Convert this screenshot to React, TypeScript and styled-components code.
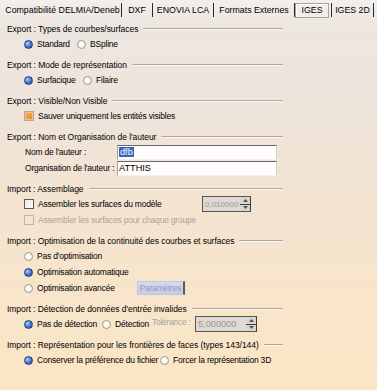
import React from "react";
import styled, { createGlobalStyle, css } from "styled-components";

const Global = createGlobalStyle`
  html, body { margin: 0; padding: 0; }
  body { font-family: "Liberation Sans", Arial, sans-serif; }
`;

const Page = styled.div`
  width: 377px;
  height: 390px;
  overflow: hidden;
  background: linear-gradient(180deg, #ece6e2 0%, #efe4da 30%, #f5e4ce 60%, #fbe5c4 100%);
  font-family: "Liberation Sans", Arial, sans-serif;
  font-size: 8.5px;
  letter-spacing: -0.2px;
  color: #000;
  display: flex;
  flex-direction: column;
`;

const TabBar = styled.div`
  height: 20px;
  display: flex;
  align-items: center;
  padding-left: 4px;
  background: linear-gradient(180deg, #f2efec, #ece7e3);
  white-space: nowrap;
  font-size: 8.8px;
  letter-spacing: 0;
`;

const Tab = styled.div<{ $w: number; $active?: boolean }>`
  width: ${(p) => p.$w}px;
  flex: none;
  height: 15px;
  display: flex;
  align-items: center;
  justify-content: center;
  box-sizing: border-box;
  overflow: hidden;
  ${(p) =>
    p.$active &&
    css`
      border: 1px solid #aaa49e;
      box-shadow: inset 1px 1px 0 #fff;
      background: #f1ede9;
    `}
`;

const Sep = styled.div`
  width: 1px;
  height: 14px;
  background: #2a2a2a;
  flex: none;
`;

const Content = styled.div`
  padding: 2px 0 0 7px;
  width: 276px;
  display: flex;
  flex-direction: column;
`;

const Section = styled.div`
  display: flex;
  flex-direction: column;
  padding-bottom: 6px;
`;

const Header = styled.div`
  height: 14px;
  display: flex;
  align-items: center;
  gap: 5px;
  white-space: nowrap;
  font-size: 8.5px;
  letter-spacing: -0.05px;
  &::after {
    content: "";
    flex: 1;
    height: 0;
    border-top: 1px solid #b0a89f;
    border-bottom: 1px solid #fbf6f0;
    margin-top: -1px;
  }
`;

const Body = styled.div`
  padding-left: 17px;
  display: flex;
  flex-direction: column;
`;

const Row = styled.div<{ $cols?: string }>`
  height: 16px;
  display: ${(p) => (p.$cols ? "grid" : "flex")};
  ${(p) => p.$cols && css`grid-template-columns: ${p.$cols};`}
  align-items: center;
  white-space: nowrap;
`;

const Option = styled.label<{ $disabled?: boolean }>`
  display: inline-flex;
  align-items: center;
  gap: 4px;
  color: ${(p) => (p.$disabled ? "#aaa39b" : "#000")};
`;

const RadioDot = styled.span<{ $on?: boolean }>`
  width: 9px;
  height: 9px;
  border-radius: 50%;
  box-sizing: border-box;
  flex: none;
  ${(p) =>
    p.$on
      ? css`
          border: 1px solid #1c3f86;
          background: radial-gradient(circle at 35% 35%, #b8d0f4 0%, #4f7fcf 45%, #1b418e 100%);
        `
      : css`
          border: 1px solid #9a9690;
          background: radial-gradient(circle at 40% 40%, #fffff8 0%, #f6f1e4 100%);
        `}
`;

const Box = styled.span<{ $variant: "orange" | "plain" | "disabled" }>`
  width: 10px;
  height: 10px;
  box-sizing: border-box;
  flex: none;
  ${(p) =>
    p.$variant === "orange"
      ? css`
          border: 1px solid #b9a78f;
          background: #fff8ee;
          box-shadow: inset 0 0 0 1px #f7c07a;
          background-image: linear-gradient(135deg, #f8b060, #e58a2a);
          background-size: 6px 6px;
          background-position: center;
          background-repeat: no-repeat;
        `
      : p.$variant === "plain"
      ? css`
          border: 1px solid #5c5955;
          background: linear-gradient(135deg, #efeae2, #fdfbf7);
        `
      : css`
          border: 1px solid #bdb6ad;
          background: transparent;
        `}
`;

const FieldGrid = styled.div`
  display: grid;
  grid-template-columns: 92px 160px;
  grid-auto-rows: 16px;
  align-items: center;
  margin-left: 1px;
  white-space: nowrap;
`;

const TextInput = styled.div`
  height: 15px;
  box-sizing: border-box;
  border-top: 1px solid #6b6864;
  border-left: 1px solid #a8a29b;
  border-right: 1px solid #d6d0c8;
  border-bottom: 1px solid #f4f0ea;
  background: #fffdfd;
  display: flex;
  align-items: center;
  padding-left: 1px;
  font-size: 9.2px;
  letter-spacing: 0;
`;

const Selected = styled.span`
  background: #3465b8;
  color: #fff;
  padding: 0 1px;
`;

const Spinner = styled.div<{ $w: number; $fs: number }>`
  width: ${(p) => p.$w}px;
  height: 16px;
  box-sizing: border-box;
  border: 1px solid #555;
  border-right: none;
  background: #dedad3;
  display: flex;
  align-items: center;
  color: #9c978f;
  font-size: ${(p) => p.$fs}px;
  letter-spacing: 0;
  padding-left: 2px;
  overflow: hidden;
`;

const SpinText = styled.span`
  flex: 1;
`;

const SpinBtns = styled.div`
  width: 11px;
  height: 14px;
  flex: none;
  display: flex;
  flex-direction: column;
  background: #3c3c3c;
  gap: 1px;
  box-sizing: border-box;
`;

const SpinBtn = styled.div`
  flex: 1;
  background: #d9d5cf;
  display: flex;
  align-items: center;
  justify-content: center;
  margin: 0 1px 0 0;
`;

const Button = styled.div`
  width: 48px;
  height: 14px;
  box-sizing: border-box;
  background: linear-gradient(180deg, #d6daec, #c6cbe0);
  border: 1px solid #c2c6da;
  border-right: 2px solid #5a5a66;
  color: #8f98c4;
  display: flex;
  align-items: center;
  justify-content: center;
  font-size: 8.4px;
`;

const Tol = styled.span`
  color: #aaa49c;
  align-self: flex-start;
  margin-top: 1px;
  font-size: 8.4px;
`;

const Arrow = ({ up }: { up?: boolean }) => (
  <svg width="5" height="3" viewBox="0 0 5 3">
    <path d={up ? "M0 3 L2.5 0 L5 3Z" : "M0 0 L2.5 3 L5 0Z"} fill="#555" />
  </svg>
);

const Spin = ({ w, fs, value }: { w: number; fs: number; value: string }) => (
  <Spinner $w={w} $fs={fs}>
    <SpinText>{value}</SpinText>
    <SpinBtns>
      <SpinBtn>
        <Arrow up />
      </SpinBtn>
      <SpinBtn>
        <Arrow />
      </SpinBtn>
    </SpinBtns>
  </Spinner>
);

const Radio = ({ on, children }: { on?: boolean; children: React.ReactNode }) => (
  <Option>
    <RadioDot $on={on} />
    {children}
  </Option>
);

const tabs = [
  { label: "Compatibilité DELMIA/Deneb", w: 117 },
  { label: "DXF", w: 30 },
  { label: "ENOVIA LCA", w: 60 },
  { label: "Formats Externes", w: 80 },
];

export default function App() {
  return (
    <Page>
      <Global />
      <TabBar>
        {tabs.map((t) => (
          <React.Fragment key={t.label}>
            <Tab $w={t.w}>{t.label}</Tab>
            <Sep />
          </React.Fragment>
        ))}
        <Tab $w={34} $active>
          IGES
        </Tab>
        <Tab $w={2} />
        <Sep />
        <Tab $w={41}>IGES 2D</Tab>
        <Sep />
      </TabBar>
      <Content>
        <Section>
          <Header>Export : Types de courbes/surfaces</Header>
          <Body>
            <Row $cols="53px auto">
              <Radio on>Standard</Radio>
              <Radio>BSpline</Radio>
            </Row>
          </Body>
        </Section>
        <Section>
          <Header>Export : Mode de représentation</Header>
          <Body>
            <Row $cols="59px auto">
              <Radio on>Surfacique</Radio>
              <Radio>Filaire</Radio>
            </Row>
          </Body>
        </Section>
        <Section>
          <Header>Export : Visible/Non Visible</Header>
          <Body>
            <Row>
              <Option>
                <Box $variant="orange" />
                Sauver uniquement les entités visibles
              </Option>
            </Row>
          </Body>
        </Section>
        <Section>
          <Header>Export : Nom et Organisation de l'auteur</Header>
          <Body>
            <FieldGrid>
              <span>Nom de l'auteur :</span>
              <TextInput>
                <Selected>dfb</Selected>
              </TextInput>
              <span>Organisation de l'auteur :</span>
              <TextInput>ATTHIS</TextInput>
            </FieldGrid>
          </Body>
        </Section>
        <Section>
          <Header>Import : Assemblage</Header>
          <Body>
            <Row $cols="178px auto">
              <Option>
                <Box $variant="plain" />
                Assembler les surfaces du modèle
              </Option>
              <Spin w={49} fs={8} value="0,010000" />
            </Row>
            <Row>
              <Option $disabled>
                <Box $variant="disabled" />
                Assembler les surfaces pour chaque groupe
              </Option>
            </Row>
          </Body>
        </Section>
        <Section>
          <Header>Import : Optimisation de la continuité des courbes et surfaces</Header>
          <Body>
            <Row>
              <Radio>Pas d'optimisation</Radio>
            </Row>
            <Row>
              <Radio on>Optimisation automatique</Radio>
            </Row>
            <Row $cols="113px auto">
              <Radio>Optimisation avancée</Radio>
              <Button>Paramètres</Button>
            </Row>
          </Body>
        </Section>
        <Section>
          <Header>Import : Détection de données d'entrée invalides</Header>
          <Body>
            <Row $cols="78px 50px 43px 62px">
              <Radio on>Pas de détection</Radio>
              <Radio>Détection</Radio>
              <Tol>Tolérance :</Tol>
              <Spin w={62} fs={9.2} value="5,000000" />
            </Row>
          </Body>
        </Section>
        <Section>
          <Header>Import : Représentation pour les frontières de faces (types 143/144)</Header>
          <Body>
            <Row $cols="136px auto">
              <Radio on>Conserver la préférence du fichier</Radio>
              <Radio>Forcer la représentation 3D</Radio>
            </Row>
          </Body>
        </Section>
      </Content>
    </Page>
  );
}
